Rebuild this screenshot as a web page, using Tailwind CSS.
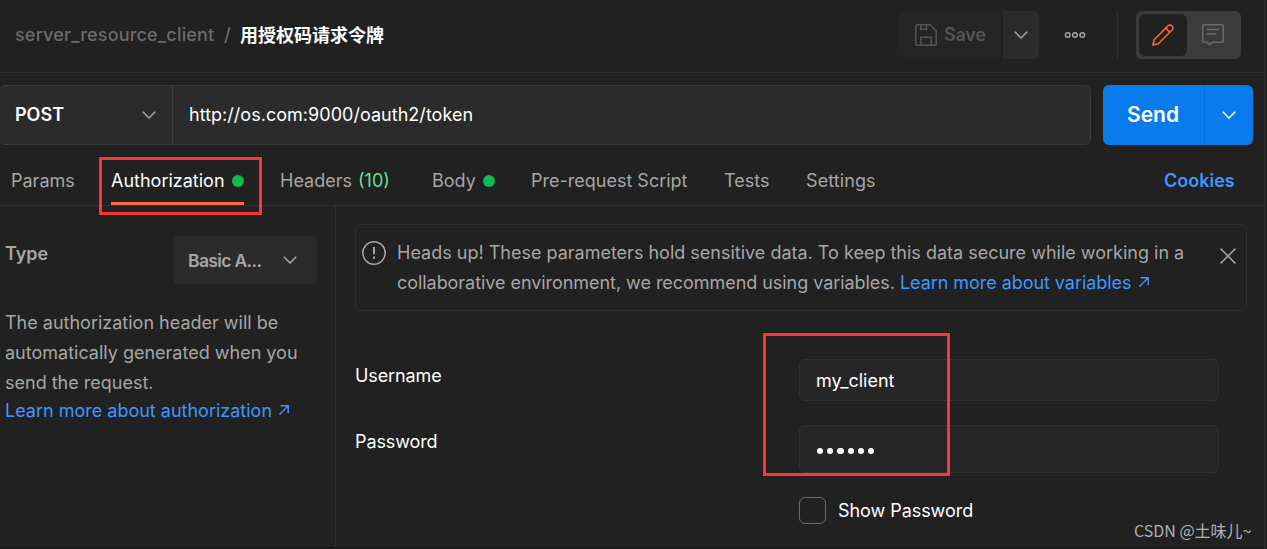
<!DOCTYPE html>
<html lang="en">
<head>
<meta charset="utf-8">
<title>Request editor</title>
<script src="https://cdn.jsdelivr.net/npm/@tailwindcss/browser@4"></script>
</head>
<body class="bg-[#212121]">
<div class="relative flex h-[549px] w-[1267px] overflow-hidden bg-[#212121] font-['Inter','Noto_Sans_CJK_SC',sans-serif] text-[18px] leading-[30px] text-[#a6a6a6]">
  <div class="flex w-[1265px] flex-col border-r border-[#2e2e2e]">

    <header class="flex h-[73px] shrink-0 items-start border-b border-[#303030] pt-[11px]">
      <div class="flex h-12 flex-1 items-center whitespace-nowrap pl-[15px] font-medium text-[#6b6b6b]">
        <span class="w-[209px] tracking-[0.18px]">server_resource_client</span>
        <span class="w-4">/</span>
        <span class="pt-px font-bold text-white">用授权码请求令牌</span>
      </div>
      <button class="flex h-12 w-[102px] items-center rounded-l-md rounded-r-sm bg-[#252525] pl-4 font-semibold text-[#545454]">
        <svg class="mr-[7px] size-[22px]" viewBox="0 0 22 22" fill="none" stroke="currentColor" stroke-width="1.5"><path d="M1.8 .8h13.4l6 6v13.4a1 1 0 0 1-1 1H1.8a1 1 0 0 1-1-1V1.8a1 1 0 0 1 1-1zM5.8 .8v4.4h5.8V.8M5.8 21v-7.8h10.4V21"/></svg>
        <span class="tracking-[-0.2px]">Save</span>
      </button>
      <button class="ml-0.5 flex h-12 w-9 items-center justify-center rounded-r-md bg-[#2b2b2b] text-[#a6a6a6]">
        <svg class="h-2 w-[14px]" viewBox="0 0 14 8" fill="none" stroke="currentColor" stroke-width="1.5"><path d="M.8 .8 7 7 13.2 .8"/></svg>
      </button>
      <button class="ml-[25px] flex h-12 w-[22px] items-center text-[#a6a6a6]">
        <svg class="h-2 w-[22px]" viewBox="0 0 22 8" fill="none" stroke="currentColor" stroke-width="1.5"><circle cx="3.7" cy="4" r="2.3"/><circle cx="11" cy="4" r="2.3"/><circle cx="18.3" cy="4" r="2.3"/></svg>
      </button>
      <div class="ml-[31px] h-12 w-px bg-[#303030]"></div>
      <div class="ml-[18px] mr-[23px] flex h-12 w-[105px] rounded-md bg-[#3b3b3b] p-[3px]">
        <div class="flex h-[42px] w-12 items-center justify-center rounded-md bg-[#212121] text-[#ff6c37]">
          <svg class="size-[22px]" viewBox="0 0 22 22" fill="none" stroke="currentColor" stroke-width="1.5" stroke-linejoin="round"><path d="M.9 21.1 2.2 15.7 16 1.9a2.9 2.9 0 0 1 4.1 4.1L6.3 19.8zM13.8 4.1l4.1 4.1"/></svg>
        </div>
        <div class="flex flex-1 items-center justify-center text-[#6b6b6b]">
          <svg class="ml-px size-[22px]" viewBox="0 0 22 22" fill="none" stroke="currentColor" stroke-width="1.5"><path d="M1.8 .8h18.4a1 1 0 0 1 1 1v15.4a1 1 0 0 1-1 1H10.5l-2.8 2.4-2.8-2.4H1.8a1 1 0 0 1-1-1V1.8a1 1 0 0 1 1-1zM5 5.6h12M5 10h9"/></svg>
        </div>
      </div>
    </header>

    <div class="flex h-[72px] shrink-0 pt-3">
      <div class="flex h-[60px] w-[1092px] -ml-px rounded-md border border-[#3b3b3b] bg-[#2b2b2b] text-white">
        <div class="flex w-[173px] items-center justify-between border-r border-[#3b3b3b] pl-[15px] pr-4 font-semibold">
          POST
          <svg class="h-2 w-[14px] text-[#a6a6a6]" viewBox="0 0 14 8" fill="none" stroke="currentColor" stroke-width="1.5"><path d="M.8 .8 7 7 13.2 .8"/></svg>
        </div>
        <div class="flex items-center pl-4 tracking-[0.03px]">http://os.com:9000/oauth2/token</div>
      </div>
      <div class="ml-3 flex h-[60px] w-[150px] rounded-md bg-[#097bed] text-white">
        <div class="flex w-[102px] items-center border-r border-[#0b6dd0] pl-6 text-[21px] font-semibold">Send</div>
        <div class="flex flex-1 items-center justify-center">
          <svg class="h-2 w-[14px]" viewBox="0 0 14 8" fill="none" stroke="currentColor" stroke-width="1.5"><path d="M.8 .8 7 7 13.2 .8"/></svg>
        </div>
      </div>
    </div>

    <nav class="flex h-[61px] shrink-0 items-start whitespace-nowrap border-b border-[#303030] pl-[11px]">
      <div class="w-[100px] pt-[21px]">Params</div>
      <div class="w-[169px]">
        <div class="flex h-[60px] w-[133px] items-center justify-between border-b-3 border-[#ff6c37] pt-[15px] text-white"><span>Authorization</span><span class="size-3 rounded-full bg-[#0cbb52]"></span></div>
      </div>
      <div class="w-[152px] pt-[21px]">Headers <span class="ml-px text-[#6bdd9a]">(10)</span></div>
      <div class="flex w-[99px] items-center pt-[21px]">Body<span class="ml-[7px] size-3 rounded-full bg-[#0cbb52]"></span></div>
      <div class="w-[193px] pt-[21px]">Pre-request Script</div>
      <div class="w-[81px] pt-[21px]">Tests</div>
      <div class="flex-1 pl-px pt-[21px] tracking-[0.1px]">Settings</div>
      <div class="w-[100px] pt-[21px] font-semibold text-[#4096ff]">Cookies</div>
    </nav>

    <main class="flex h-[342px] border-b border-[#181818]">
      <aside class="w-[336px] shrink-0 border-r border-[#303030] pl-[5px] pt-[30px]">
        <div class="flex h-[72px] items-start">
          <div class="w-[168px] pt-[3px] font-semibold">Type</div>
          <div class="flex h-12 w-36 items-center justify-between rounded-md bg-[#2b2b2b] pl-[15px] pr-5 font-semibold"><span class="pt-px text-[17.5px] tracking-[-0.65px]">Basic A...</span>
            <svg class="h-2 w-[14px]" viewBox="0 0 14 8" fill="none" stroke="currentColor" stroke-width="1.5"><path d="M.8 .8 7 7 13.2 .8"/></svg>
          </div>
        </div>
        <p class="whitespace-nowrap">The authorization header will be<br>automatically generated when you<br>send the request.</p>
        <a class="-mt-[2px] flex items-center whitespace-nowrap text-[#4096ff]">Learn more about authorization
          <svg class="-mt-0.5 ml-[7px] size-[10px]" viewBox="0 0 10 10" fill="none" stroke="currentColor" stroke-width="1.4"><path d="M.5 9.5 9 1M1.6 .8h7.6v7.4"/></svg>
        </a>
      </aside>

      <section class="flex-1 pl-[19px] pt-[18px]">
        <div class="flex h-[87px] w-[892px] rounded-md border border-[#303030] pl-1.5 pt-[13px]">
          <svg class="mt-[3px] size-6 shrink-0" viewBox="0 0 24 24" fill="none" stroke="currentColor" stroke-width="1.5"><circle cx="12" cy="12" r="11.2"/><path d="M12 6v7.2M12 15.6v2.2" stroke-width="2"/></svg>
          <p class="ml-[11px] flex-1 whitespace-nowrap">Heads up! These parameters hold sensitive data. To keep this data secure while working in a<br><span class="tracking-[-0.05px]">collaborative environment, we recommend using variables. <a class="text-[#4096ff]">Learn more about variables<svg class="ml-2 inline size-[10px] align-[2px]" viewBox="0 0 10 10" fill="none" stroke="currentColor" stroke-width="1.4"><path d="M.5 9.5 9 1M1.6 .8h7.6v7.4"/></svg></a></span></p>
          <svg class="mr-2.5 mt-[10px] size-4 shrink-0" viewBox="0 0 16 16" fill="none" stroke="currentColor" stroke-width="1.5"><path d="M.5 .5l15 15M15.5 .5l-15 15"/></svg>
        </div>

        <div class="mt-12 flex h-[66px] items-start text-white">
          <div class="w-[444px] pt-0.5 tracking-[-0.1px]">Username</div>
          <div class="flex h-[42px] w-[420px] items-center rounded-md border border-[#303030] bg-[#262626] pl-4 pt-0.5">my_client</div>
        </div>
        <div class="flex h-[72px] items-start text-white">
          <div class="w-[444px] pt-0.5 tracking-[-0.1px]">Password</div>
          <div class="flex h-12 w-[420px] items-center gap-[3.9px] rounded-md border border-[#303030] bg-[#262626] pl-[17px] pt-1">
            <span class="size-[6.3px] rounded-full bg-white"></span><span class="size-[6.3px] rounded-full bg-white"></span><span class="size-[6.3px] rounded-full bg-white"></span><span class="size-[6.3px] rounded-full bg-white"></span><span class="size-[6.3px] rounded-full bg-white"></span><span class="size-[6.3px] rounded-full bg-white"></span>
          </div>
        </div>
        <div class="ml-[444px] flex h-[27px] items-center tracking-[-0.05px] text-white">
          <span class="mr-3 size-[27px] rounded-md border border-[#6b6b6b]"></span>Show Password
        </div>
      </section>
    </main>
  </div>

  <div class="absolute left-[99px] top-[157px] h-[58px] w-[163px] border-3 border-[#ff3636]"></div>
  <div class="absolute left-[763px] top-[333px] h-[143px] w-[187px] border-3 border-[#ff3636]"></div>
  <div class="absolute left-[1134px] top-[518px] whitespace-nowrap font-['Noto_Sans_CJK_SC',sans-serif] text-[16px] leading-6 text-[#b0b0b0]">CSDN @土味儿~</div>
</div>
</body>
</html>
